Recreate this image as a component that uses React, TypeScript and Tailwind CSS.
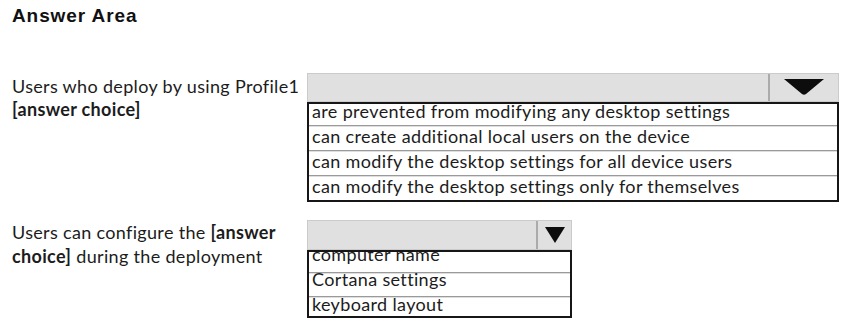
const font = "font-['Lato','Liberation_Sans',sans-serif]";

interface Row {
  text: string;
  height: number;
  shift: number;
  clip?: boolean;
}

interface DropdownProps {
  rows: Row[];
  barHeight: string;
  wide?: boolean;
}

const Dropdown = ({ rows, barHeight, wide }: DropdownProps) => {
  return (
    <div className="flex flex-col w-full">
      <div className={`flex ${barHeight} bg-[#e0e0e0] border border-[#cbcbcb]`}>
        <div className="flex-1" />
        {wide ? (
          <div className="w-[70px] flex items-center justify-center border-l-2 border-[#ababab] pb-[1px]">
            <svg width="40" height="16" viewBox="0 0 40 16">
              <path d="M0 0 L40 0 L22 15 Q20 16.5 18 15 Z" fill="#0d0d0d" />
            </svg>
          </div>
        ) : (
          <div className="w-[35px] flex items-center justify-center border-l-2 border-[#ababab]">
            <svg width="20" height="16" viewBox="0 0 20 16">
              <path d="M0 0 L20 0 L10 16 Z" fill="#0d0d0d" />
            </svg>
          </div>
        )}
      </div>
      <div className="flex flex-col border-2 border-[#161616] bg-white">
        {rows.map((r, i) => (
          <div
            key={r.text}
            style={{ height: r.height }}
            className={`pl-[3px] text-[18px] leading-[18px] tracking-[0.35px] text-[#1c1c1c] whitespace-nowrap ${
              r.clip ? "overflow-hidden" : ""
            } ${i > 0 ? "border-t border-[#9a9a9a] shadow-[inset_0_1px_0_#dedede]" : ""}`}
          >
            <div style={{ marginTop: r.shift }}>{r.text}</div>
          </div>
        ))}
      </div>
    </div>
  );
};

export default function App() {
  return (
    <div className={`w-[844px] h-[332px] bg-white ${font} text-[#1c1c1c] flex flex-col`}>
      <div className="pl-[12px] mt-[6px] text-[19px] font-bold font-['Liberation_Sans',Arial,sans-serif] leading-[19px] tracking-[0.9px] text-[#111]">
        Answer Area
      </div>

      <div className="flex mt-[48px]">
        <div className="w-[307px] pl-[12px] pt-[1.5px] text-[18px] leading-[23px] tracking-[0.33px]">
          Users who deploy by using Profile1
          <br />
          <span className="font-bold">[answer choice]</span>
        </div>
        <div className="w-[532px]">
          <Dropdown
            wide
            barHeight="h-[29px]"
            rows={[
              { text: "are prevented from modifying any desktop settings", height: 21, shift: -2 },
              { text: "can create additional local users on the device", height: 25, shift: 1 },
              { text: "can modify the desktop settings for all device users", height: 25, shift: 1 },
              { text: "can modify the desktop settings only for themselves", height: 25, shift: 0.5 },
            ]}
          />
        </div>
      </div>

      <div className="flex mt-[18px]">
        <div className="w-[307px] pl-[12px] text-[18px] leading-[24px] tracking-[0.33px]">
          Users can configure the <span className="font-bold">[answer</span>
          <br />
          <span className="font-bold">choice]</span> during the deployment
        </div>
        <div className="w-[265px]">
          <Dropdown
            barHeight="h-[30px]"
            rows={[
              { text: "computer name", height: 20, shift: -7, clip: true },
              { text: "Cortana settings", height: 24, shift: -3 },
              { text: "keyboard layout", height: 20, shift: -2 },
            ]}
          />
        </div>
      </div>
    </div>
  );
}
